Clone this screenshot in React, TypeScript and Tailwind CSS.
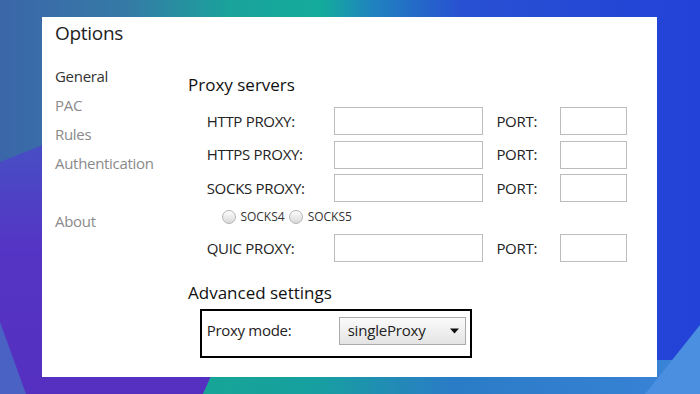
const proxyRows = ["HTTP PROXY:", "HTTPS PROXY:", "SOCKS PROXY:"];
const menu = ["General", "PAC", "Rules", "Authentication"];

function Wallpaper() {
  return (
    <svg
      className="absolute inset-0 h-full w-full"
      viewBox="0 0 700 394"
      preserveAspectRatio="none"
    >
      <defs>
        <linearGradient id="top" x1="0" y1="0" x2="1" y2="0">
          <stop offset="0" stopColor="#3b66a9" />
          <stop offset="0.18" stopColor="#357aa6" />
          <stop offset="0.33" stopColor="#1aa39b" />
          <stop offset="0.46" stopColor="#13ab9c" />
          <stop offset="0.53" stopColor="#1f84be" />
          <stop offset="0.66" stopColor="#2850d2" />
          <stop offset="1" stopColor="#2342d8" />
        </linearGradient>
        <linearGradient id="purple" x1="0" y1="0" x2="0" y2="1">
          <stop offset="0" stopColor="#4650c4" />
          <stop offset="0.45" stopColor="#5534c4" />
          <stop offset="1" stopColor="#5530c0" />
        </linearGradient>
        <linearGradient id="bottom" x1="0" y1="0" x2="1" y2="0">
          <stop offset="0" stopColor="#17a597" />
          <stop offset="0.22" stopColor="#16a09f" />
          <stop offset="0.5" stopColor="#2a7cc6" />
          <stop offset="0.85" stopColor="#3580d2" />
          <stop offset="1" stopColor="#3b86d8" />
        </linearGradient>
      </defs>
      <rect width="700" height="394" fill="url(#top)" />
      <polygon
        points="0,162 60,138 300,300 213,377 203,394 0,394"
        fill="url(#purple)"
      />
      <polygon points="0,322 26,394 0,394" fill="#4a62c4" />
      <polygon points="218,360 700,360 700,394 203,394" fill="url(#bottom)" />
      <polygon points="700,325 645,394 700,394" fill="#4b8fe0" />
    </svg>
  );
}

function ProxyRow({ label }: { label: string }) {
  return (
    <div className="flex h-[28px] items-center">
      <span className="w-[146px] pl-[18.7px] tracking-[-0.3px]">{label}</span>
      <div className="h-full w-[149px] border border-[#bcbcbc] bg-white" />
      <span className="ml-[13.4px] w-[64px] tracking-[-0.3px]">PORT:</span>
      <div className="h-full w-[67px] border border-[#bcbcbc] bg-white" />
    </div>
  );
}

function Radio({ label }: { label: string }) {
  return (
    <div className="flex items-center gap-[4.7px]">
      <span className="h-[14px] w-[14px] rounded-full border border-[#b4b4b4] bg-[linear-gradient(#fdfdfd,#d9d9d9)]" />
      <span className="text-[12px] leading-[14px] text-[#333]">{label}</span>
    </div>
  );
}

export default function App() {
  return (
    <div className="relative h-[394px] w-[700px] overflow-hidden pl-[42px] pt-[17px] font-['Open_Sans',sans-serif]">
      <Wallpaper />

      <div className="relative h-[360px] w-[615px] bg-white text-[#222]">
        <div className="pl-[13px] pt-[3px] text-[19px] leading-[26px] tracking-[-0.3px]">
          Options
        </div>

        <div className="flex items-start">
          {/* left menu */}
          <div className="w-[146px] pl-[13px] pt-[16.4px] text-[15px] leading-[29px] tracking-[-0.3px]">
            {menu.map((item, i) => (
              <div
                key={item}
                className={i === 0 ? "text-[#333]" : "text-[#8a8a8a]"}
              >
                {item}
              </div>
            ))}
            <div className="h-[29px]" />
            <div className="text-[#8a8a8a]">About</div>
          </div>

          {/* settings */}
          <div className="pt-[27px] text-[15px]">
            <div className="text-[17px] font-medium leading-[24px] text-[#111]">
              Proxy servers
            </div>

            <div className="mt-[10.3px] flex flex-col gap-[5.33px]">
              {proxyRows.map((r) => (
                <ProxyRow key={r} label={r} />
              ))}
            </div>

            <div className="mt-[8px] flex h-[14px] items-center gap-[4.3px] pl-[33.7px]">
              <Radio label="SOCKS4" />
              <Radio label="SOCKS5" />
            </div>

            <div className="mt-[10px]">
              <ProxyRow label="QUIC PROXY:" />
            </div>

            <div className="mt-[19.4px] text-[17px] font-medium leading-[24px] text-[#111]">
              Advanced settings
            </div>

            <div className="ml-[12px] mt-[3.6px] flex h-[49px] w-[272px] items-start border-2 border-black pl-[4.7px] pt-[5.7px]">
              <span className="flex h-[28px] w-[132.3px] items-center tracking-[-0.3px]">
                Proxy mode:
              </span>
              <div className="flex h-[28px] w-[127px] items-center justify-between border border-[#ababab] bg-[linear-gradient(#fbfbfb,#e4e4e4)] pl-[7.7px] pr-[6px]">
                <span className="tracking-[-0.2px]">singleProxy</span>
                <svg width="9" height="6" viewBox="0 0 9 6">
                  <path d="M0 0.5H9L4.5 5.5Z" fill="#111" />
                </svg>
              </div>
            </div>
          </div>
        </div>
      </div>
    </div>
  );
}
